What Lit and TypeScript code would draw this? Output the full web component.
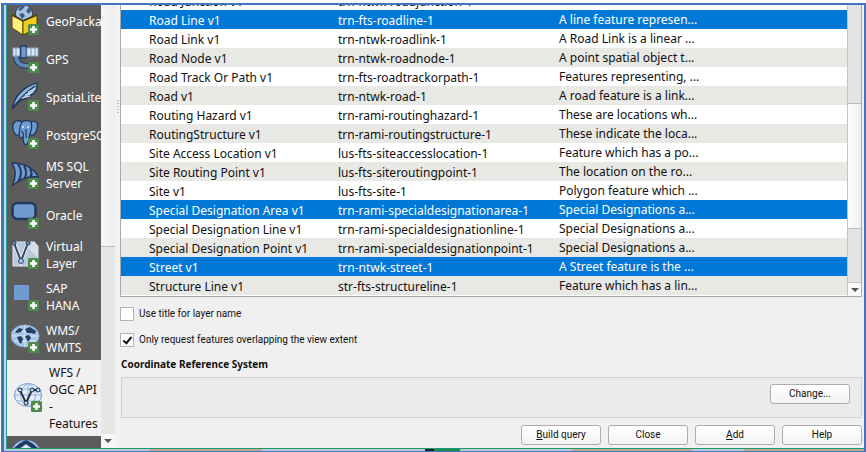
import { LitElement, html, svg, css, TemplateResult } from "lit";
import { customElement, property } from "lit/decorators.js";
import { classMap } from "lit/directives/class-map.js";

const S = "#22395c";
const B = "#6f9bd1";

const ICONS: Record<string, TemplateResult> = {
  geopackage: svg`
    <path d="M1 9 12 15V29L1 22Z" fill="#fdf07a" stroke="#4a3f10"/>
    <path d="M12 15 26 9V22L12 29Z" fill="#f0cf1e" stroke="#4a3f10"/>
    <path d="M1 9 6 7H21L26 9 12 15Z" fill="#6b5a10"/>
    <path d="M5 10.500A8.500 8.500 0 1 1 21 10.500L12 14.500Z" fill="#a9c3e2" stroke="${S}"/>
    <path d="M7 4 10 0 14 0 12 3 9 5ZM15 5 18 1 21 4 18 8ZM8 8 12 7 14 10 11 13Z" fill="#3a5c87"/>
    <path d="M1 9 12 15 26 9" fill="none" stroke="#4a3f10" stroke-width="1.500"/>`,
  gps: svg`
    <path d="M5 11C5 19 9 22 18 22" fill="none" stroke="${S}" stroke-width="6"/>
    <path d="M5 11C5 19 9 22 18 22" fill="none" stroke="#5f87b8" stroke-width="4"/>
    <rect x="2" y="4" width="8" height="8" fill="#dbe7f4" stroke="#8ba9cb"/>
    <path d="M5 4V12" stroke="#6f94c0"/>
    <rect x="9.500" y="2" width="6" height="12" rx="1" fill="${B}" stroke="${S}" stroke-width="1.500"/>
    <rect x="16" y="4" width="11" height="8" fill="#dbe7f4" stroke="#8ba9cb"/>
    <path d="M20 4V12M24 4V12" stroke="#6f94c0"/>`,
  feather: svg`
    <path d="M2 24C4 14 13 4 26 1C27 3 25 5 26 7C23 12 17 16 10 18L2 26Z" fill="#8fb3dc" stroke="${S}" stroke-width="1.500"/>
    <path d="M1 27C8 17 14 11 24 4" fill="none" stroke="${S}" stroke-width="1.500"/>
    <path d="M11 16 19 14M14 13 22 10M17 10 24 7" stroke="#e4edf7"/>`,
  elephant: svg`
    <path d="M2 5C3 0 8 0 11 2C14 0 18 0 20 2C24 0 28 3 26 8C25 13 23 16 20 15L19 14C18 17 18 22 16 24C13 26 12 22 12 17C9 19 8 17 8 15C4 17 1 10 2 5Z" fill="${B}" stroke="${S}" stroke-width="1.300"/>
    <path d="M11 2C8 6 9 11 8 15M20 2C22 7 20 10 19 14M12 17C13 14 12 12 10 11M15 9V18" fill="none" stroke="${S}" stroke-width="1.200"/>
    <circle cx="12" cy="7" r="1" fill="#dfeaf6"/><circle cx="17" cy="7" r="1" fill="#dfeaf6"/>`,
  mssql: svg`
    <path d="M1 3C14 3 24 9 27 17C19 16 9 19 1 26C5 18 6 11 1 3Z" fill="${B}" stroke="${S}" stroke-width="1.500"/>
    <path d="M7 4C11 10 11 16 7 22M13 6C16 11 16 15 13 19M19 9C21 12 21 15 19 17" fill="none" stroke="${S}" stroke-width="2"/>`,
  oracle: svg`<rect x="1.500" y="3" width="23" height="16" rx="5" fill="${B}" stroke="${S}" stroke-width="2.500"/>`,
  virtual: svg`
    <path d="M2 2H22L27 6V26H2Z" fill="#b9c8da" stroke="#e2e8ef"/>
    <path d="M17 8 23 1 27 6V18Z" fill="#d5dee8"/>
    <path d="M3 3 10 21 17 3" fill="none" stroke="#e8eef5" stroke-width="4"/>
    <path d="M3 3 10 21 17 3" fill="none" stroke="#33485f" stroke-width="2"/>
    <circle cx="3" cy="3" r="2" fill="#6d86a5" stroke="#33485f"/>
    <circle cx="17" cy="3" r="2" fill="#6d86a5" stroke="#33485f"/>
    <circle cx="10" cy="21" r="2.500" fill="#a9c3e2" stroke="#33485f"/>`,
  hana: svg`<rect x="3" y="3" width="15" height="15" fill="${B}"/>`,
  wms: svg`
    <ellipse cx="14" cy="12" rx="14" ry="11" fill="#a9c5e6" stroke="#8fb0d8"/>
    <path d="M1 12H27M3 7H25M3 17H25M14 1V23" stroke="#d5e4f5"/>
    <path d="M4 8 8 4 12 5 10 8 6 9ZM6 13 10 12 12 15 10 20 8 18ZM14 5 19 3 25 7 24 10 20 9 16 9ZM14 12 18 11 20 14 17 18Z" fill="#243e64"/>`,
  wfs: svg`
    <ellipse cx="14" cy="12" rx="13.500" ry="11.500" fill="#e4edf8" stroke="#6f9bd1"/>
    <path d="M0 12H28M14 0V24M3 6H25M3 18H25M14 0C4 7 4 17 14 24C24 17 24 7 14 0" fill="none" stroke="#8fb2da"/>
    <path d="M6 7 12 20 18 7 24 7" fill="none" stroke="#1d2c3f" stroke-width="1.800"/>
    <circle cx="6" cy="7" r="2" fill="#c5d9ef" stroke="#1d2c3f"/>
    <circle cx="12" cy="20" r="2" fill="#c5d9ef" stroke="#1d2c3f"/>
    <circle cx="18" cy="7" r="2" fill="#c5d9ef" stroke="#1d2c3f"/>
    <circle cx="24" cy="7" r="2" fill="#c5d9ef" stroke="#1d2c3f"/>`,
  wcs: svg`
    <ellipse cx="15" cy="12" rx="14" ry="12" fill="#b9d0ec" stroke="#5c86ba"/>
    <path d="M3 8 9 3 15 0 21 3 27 8 22 9 15 4 8 9Z" fill="#1f3a5f"/>
    <path d="M11 9 15 5 19 9Z" fill="#e4edf8"/>`,
};

const PLUS = svg`
  <rect x="17" y="18" width="11" height="11" rx="1.500" fill="#4f8a4c"/>
  <path d="M22.500 20V27M19 23.500H26" stroke="#fff" stroke-width="2.500"/>`;

interface Source { icon: string; label: string; active?: boolean; }

const SOURCES: Source[] = [
  { icon: "geopackage", label: "GeoPackage" },
  { icon: "gps", label: "GPS" },
  { icon: "feather", label: "SpatiaLite" },
  { icon: "elephant", label: "PostgreSQL" },
  { icon: "mssql", label: "MS SQL\nServer" },
  { icon: "oracle", label: "Oracle" },
  { icon: "virtual", label: "Virtual\nLayer" },
  { icon: "hana", label: "SAP\nHANA" },
  { icon: "wms", label: "WMS/\nWMTS" },
  { icon: "wfs", label: "WFS /\nOGC API\n-\nFeatures", active: true },
  { icon: "wcs", label: "" },
];

const LAYERS: [string, string, string, boolean?][] = [
  ["Road Junction v1", "trn-ntwk-roadjunction-1", ""],
  ["Road Line v1", "trn-fts-roadline-1", "A line feature represen...", true],
  ["Road Link v1", "trn-ntwk-roadlink-1", "A Road Link is a linear ..."],
  ["Road Node v1", "trn-ntwk-roadnode-1", "A point spatial object t..."],
  ["Road Track Or Path v1", "trn-fts-roadtrackorpath-1", "Features representing, ..."],
  ["Road v1", "trn-ntwk-road-1", "A road feature is a link..."],
  ["Routing Hazard v1", "trn-rami-routinghazard-1", "These are locations wh..."],
  ["RoutingStructure v1", "trn-rami-routingstructure-1", "These indicate the loca..."],
  ["Site Access Location v1", "lus-fts-siteaccesslocation-1", "Feature which has a po..."],
  ["Site Routing Point v1", "lus-fts-siteroutingpoint-1", "The location on the ro..."],
  ["Site v1", "lus-fts-site-1", "Polygon feature which ..."],
  ["Special Designation Area v1", "trn-rami-specialdesignationarea-1", "Special Designations a...", true],
  ["Special Designation Line v1", "trn-rami-specialdesignationline-1", "Special Designations a..."],
  ["Special Designation Point v1", "trn-rami-specialdesignationpoint-1", "Special Designations a..."],
  ["Street v1", "trn-ntwk-street-1", "A Street feature is the ...", true],
  ["Structure Line v1", "str-fts-structureline-1", "Feature which has a lin..."],
];

@customElement("source-list")
export class SourceList extends LitElement {
  static styles = css`
    :host { display: flex; flex: none; overflow: hidden; font-size: 12px; line-height: 17px; }
    ul { list-style: none; margin: -3px 0 0; padding: 0; width: 94px; background: #5c5c5c; overflow: hidden; }
    a { display: flex; align-items: center; gap: 5px; box-sizing: border-box; min-height: 38px; padding: 4px 0 4px 4px; color: #fff; text-decoration: none; white-space: pre; }
    a.active { background: #f0f0f0; color: #111; padding-left: 7px; }
    svg { flex: none; width: 30px; height: 30px; }
    .bar { display: flex; flex-direction: column; width: 14px; background: #e6e6e6; }
    .thumb { flex: 241; background: linear-gradient(90deg, #f8f8f8, #ececec); border-bottom: 1px solid #bbb; }
    .rest { flex: 187; }
    .arrow { flex: none; height: 14px; display: grid; place-items: center; background: #f6f6f6; }
    .arrow::after { content: ""; border: 4px solid transparent; border-top-color: #555; border-bottom: 0; }
  `;
  render() {
    return html`
      <ul>${SOURCES.map((s) => html`<li><a href="#" class=${classMap({ active: !!s.active })}
        ><svg viewBox="0 0 30 30" aria-hidden="true">${ICONS[s.icon]}${PLUS}</svg><span>${s.label}</span></a></li>`)}
      </ul>
      <div class="bar"><div class="thumb"></div><div class="rest"></div><div class="arrow"></div></div>`;
  }
}

@customElement("layer-table")
export class LayerTable extends LitElement {
  @property({ attribute: false }) layers = LAYERS;
  static styles = css`
    :host { display: flex; min-height: 0; overflow: hidden; background: #fff; border: 1px solid #a8a8a8; border-top: 0; font-size: 12px; }
    .view { flex: 1; min-width: 0; overflow: hidden; }
    table { width: 100%; margin-top: -14px; table-layout: fixed; border-collapse: collapse; }
    .name { width: 217px; }
    .id { width: 221px; }
    td { line-height: 17px; padding: 2px 0 0; white-space: nowrap; overflow: hidden; color: #111; }
    td:first-child { padding-left: 28px; }
    td:last-child { line-height: 19px; padding-top: 0; }
    tr { height: 19px; }
    tr:nth-child(even) { background: #e8e8e5; }
    tr:nth-child(odd) { background: #fff; }
    tr.selected { background: #0078d7; }
    tr.selected td { color: #fff; }
    .bar { display: flex; flex-direction: column; width: 13px; background: #e4e4e4; border-left: 1px solid #c4c4c4; }
    .before { flex: 98; }
    .thumb { flex: 125; background: linear-gradient(90deg, #fcfcfc, #f0f0f0); border: solid #bbb; border-width: 1px 0; }
    .after { flex: 53; }
    .arrow { flex: none; height: 13px; display: grid; place-items: center; background: #f8f8f8; border-top: 1px solid #c4c4c4; }
    .arrow::after { content: ""; border: 4px solid transparent; border-top-color: #555; border-bottom: 0; }
  `;
  render() {
    return html`
      <div class="view"><table>
        <colgroup><col class="name"><col class="id"><col></colgroup>
        <tbody>${this.layers.map(([n, i, d, sel]) => html`
          <tr class=${classMap({ selected: !!sel })}><td>${n}</td><td>${i}</td><td>${d}</td></tr>`)}
        </tbody></table></div>
      <div class="bar"><div class="before"></div><div class="thumb"></div><div class="after"></div><div class="arrow"></div></div>`;
  }
}

@customElement("app-root")
export class AppRoot extends LitElement {
  static styles = css`
    :host { display: flex; flex-direction: column; box-sizing: border-box; height: 100vh; padding: 3px 0 0 1px; background: #fff; font-family: "Noto Sans", "Open Sans", sans-serif; font-size: 10px; color: #111; }
    .frame { flex: 1; min-height: 0; display: flex; flex-direction: column; border: 2px solid #4472c4; border-bottom-width: 1px; border-left-width: 3px; background: #b9dcea; }
    .dialog { flex: 1; min-height: 0; display: flex; margin-left: 2px; border-left: 1px solid #2f9a8c; border-bottom: 1px solid #1f9a70; background: #f0f0f0; }
    .map { flex: none; height: 2px; background: linear-gradient(90deg, #b8ccd4 0 17%, #c3aa98 17% 30%, #b8ccd4 30% 49%, #222 49% 50%, #1f8a50 50% 53%, #b8ccd4 53% 66%, #c3aa98 66% 80%, #b8ccd4 80% 86%, #c3aa98 86%); }
    .grip { flex: none; width: 5px; display: flex; justify-content: center; background: #f3f3f3; }
    .grip::after { content: ""; width: 2px; height: 15px; margin-top: 95px; background: repeating-linear-gradient(#bbb 0 1px, transparent 1px 3px); }
    .main { flex: 1; min-width: 0; display: flex; flex-direction: column; padding-right: 2px; }
    layer-table { flex: 1; }
    label { display: flex; align-items: center; gap: 5px; line-height: 14px; }
    label, button { font-family: Roboto, "Noto Sans", sans-serif; font-size: 10px; }
    .options { display: flex; flex-direction: column; gap: 12px; padding-top: 10px; }
    input { appearance: none; box-sizing: border-box; flex: none; width: 14px; height: 14px; margin: 0; background: #fff; border: 1px solid #b4b4b4; display: grid; place-items: center; }
    input:checked::after { content: ""; width: 3px; height: 7px; margin-bottom: 2px; border: solid #111; border-width: 0 2px 2px 0; transform: rotate(40deg); }
    h2 { margin: 10px 0 6px 1px; font-size: 10px; line-height: 14px; }
    .crs { display: flex; justify-content: flex-end; box-sizing: border-box; height: 41px; margin-left: 1px; padding: 6px 11px; background: #ebebeb; border: 1px solid #d2d2d2; }
    .actions { display: flex; justify-content: flex-end; gap: 7px; padding: 7px 0 3px; }
    button { box-sizing: border-box; width: 80px; height: 20px; padding: 0; border: 1px solid #adadad; border-radius: 3px; background: linear-gradient(#fff, #f3f3f3); line-height: 16px; color: #111; }
  `;
  render() {
    return html`
      <div class="frame">
        <div class="dialog">
          <source-list></source-list>
          <div class="grip"></div>
          <div class="main">
            <layer-table></layer-table>
            <div class="options">
              <label><input type="checkbox">Use title for layer name</label>
              <label><input type="checkbox" checked>Only request features overlapping the view extent</label>
            </div>
            <h2>Coordinate Reference System</h2>
            <div class="crs"><button>Change...</button></div>
            <div class="actions">
              <button><u>B</u>uild query</button><button>Close</button><button><u>A</u>dd</button><button>Help</button>
            </div>
          </div>
        </div>
        <div class="map"></div>
      </div>`;
  }
}
